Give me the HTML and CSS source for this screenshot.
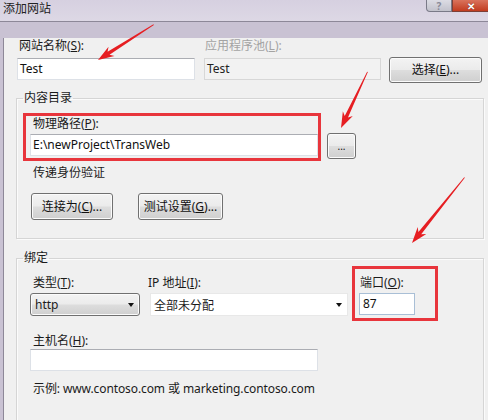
FILE: index.html
```html
<!DOCTYPE html>
<html lang="zh-CN">
<head>
<meta charset="utf-8">
<title>添加网站</title>
<link rel="stylesheet" href="styles.css">
</head>
<body>
<div class="titlebar">
  <span class="title">添加网站</span>
  <div class="caption-btns">
    <span class="cap-help">?</span>
    <span class="cap-close">✕</span>
  </div>
</div>
<div class="client">
  <div class="row1">
    <div class="field f-name">
      <div class="lbl">网站名称(<u>S</u>):</div>
      <div class="tb">Test</div>
    </div>
    <div class="field f-pool">
      <div class="lbl dis">应用程序池(<u>L</u>):</div>
      <div class="tb tb-dis">Test</div>
    </div>
    <button class="btn btn-select">选择(<u>E</u>)...</button>
  </div>

  <fieldset class="group g-content">
    <legend>内容目录</legend>
    <div class="lbl lbl-path">物理路径(<u>P</u>):</div>
    <div class="path-row">
      <div class="tb tb-path">E:\newProject\TransWeb</div>
      <button class="btn btn-browse">...</button>
    </div>
    <div class="lbl lbl-auth">传递身份验证</div>
    <div class="auth-row">
      <button class="btn btn-connect">连接为(<u>C</u>)...</button>
      <button class="btn btn-test">测试设置(<u>G</u>)...</button>
    </div>
  </fieldset>

  <fieldset class="group g-bind">
    <legend>绑定</legend>
    <div class="bind-row">
      <div class="col col-type">
        <div class="lbl">类型(<u>T</u>):</div>
        <div class="combo combo-btn"><span>http</span><span class="arrow"></span></div>
      </div>
      <div class="col col-ip">
        <div class="lbl">IP 地址(<u>I</u>):</div>
        <div class="combo combo-edit"><span>全部未分配</span><span class="arrow"></span></div>
      </div>
      <div class="col col-port">
        <div class="lbl">端口(<u>O</u>):</div>
        <div class="tb tb-port">87</div>
      </div>
    </div>
    <div class="lbl lbl-host">主机名(<u>H</u>):</div>
    <div class="tb tb-host"></div>
    <div class="lbl lbl-example">示例: www.contoso.com 或 marketing.contoso.com</div>
  </fieldset>
</div>

<div class="mark mark-path"></div>
<div class="mark mark-port"></div>
<svg class="arrows" width="488" height="420" viewBox="0 0 488 420">
  <g transform="translate(98 60) rotate(147.5)">
    <polygon points="0,0 -16,-5.5 -12.5,-1.8 -66,-0.4 -66,0.4 -12.5,1.8 -16,5.5"/>
  </g>
  <g transform="translate(341 128) rotate(115.3)">
    <polygon points="0,0 -16,-5.5 -12.5,-1.8 -62,-0.4 -62,0.4 -12.5,1.8 -16,5.5"/>
  </g>
  <g transform="translate(412 243) rotate(128.7)">
    <polygon points="0,0 -16,-5.5 -12.5,-1.8 -84,-0.4 -84,0.4 -12.5,1.8 -16,5.5"/>
  </g>
</svg>
</body>
</html>
```
FILE: styles.css
```css
* { box-sizing: border-box; }
html, body { margin: 0; padding: 0; }
body {
  width: 488px;
  height: 420px;
  overflow: hidden;
  position: relative;
  background: #c9c2d3;
  font-family: "Noto Sans", "Noto Sans CJK SC", sans-serif;
  font-size: 12px;
  color: #1b1b1b;
}
u { text-decoration: underline; text-underline-offset: 1px; }

.titlebar {
  height: 22px;
  display: flex;
  justify-content: space-between;
  align-items: flex-start;
  background: linear-gradient(#d6d0e0, #ddd8e5);
  border-bottom: 1px solid #8d8898;
}
.title {
  padding: 1px 0 0 3px;
  line-height: 16px;
  font-size: 12px;
  color: #222;
}
.caption-btns { display: flex; }
.cap-help, .cap-close {
  height: 12px;
  display: flex;
  align-items: center;
  justify-content: center;
  font-size: 10px;
  line-height: 10px;
  font-weight: bold;
}
.cap-help {
  width: 26px;
  background: linear-gradient(#dcdce4, #c2c2cc);
  border: 1px solid #7a7a88;
  border-top: none;
  border-radius: 0 0 0 4px;
  color: #8a8a98;
}
.cap-close {
  width: 36px;
  background: linear-gradient(#d9735c, #c23c20);
  border: 1px solid #7d3f36;
  border-top: none;
  border-right: none;
  color: #fff;
  text-shadow: 0 0 1px #5a1a10;
}

.client {
  margin-left: 3px;
  height: 398px;
  background: #f0f0f0;
  border-left: 1px solid #8d8898;
}

.lbl { line-height: 16px; white-space: nowrap; }
.dis { color: #a3a3a3; }

.tb {
  height: 22px;
  background: #fff;
  border: 1px solid #dde1e7;
  border-top-color: #abadb3;
  padding-left: 2px;
  line-height: 20px;
  color: #111;
}
.tb-dis {
  background: #f2f2f2;
  border-color: #d7d7d7;
  color: #222;
}

.row1 {
  display: flex;
  align-items: flex-start;
  margin-top: 16px;
  padding-left: 13px;
}
.field .lbl { padding-left: 2px; margin-bottom: 4px; }
.f-name { width: 178px; }
.f-pool { width: 177px; margin-left: 9px; }
.f-pool .lbl { padding-left: 1px; }

.btn {
  font: inherit;
  color: #111;
  padding: 0;
  border: 1px solid #707070;
  border-radius: 3px;
  background: linear-gradient(#f3f3f3 0%, #ebebeb 48%, #dddddd 52%, #cfcfcf 100%);
  box-shadow: inset 0 0 0 1px #fbfbfb;
  text-align: center;
  line-height: 16px;
}
.btn-select { width: 93px; height: 26px; margin-left: 8px; margin-top: 19px; }

.group {
  margin: 0 0 0 12px;
  width: 468px;
  padding: 0;
  border: 1px solid #d5d5d5;
  box-shadow: inset 1px 1px 0 #fbfbfb, 1px 1px 0 #fbfbfb;
  min-width: 0;
}
.group legend {
  margin-left: 6px;
  padding: 0 1px;
  line-height: 16px;
}
.g-content { margin-top: 7px; padding-bottom: 18px; }

.lbl-path { margin: 10px 0 1px 16px; }
.path-row { display: flex; align-items: flex-start; margin-left: 13px; }
.tb-path { width: 288px; margin-top: 1px; }
.btn-browse { width: 29px; height: 26px; margin-left: 9px; font-size: 10px; line-height: 10px; }

.lbl-auth { margin: 6px 0 0 16px; }
.auth-row { display: flex; margin: 12px 0 0 14px; }
.btn-connect { width: 82px; height: 27px; }
.btn-test { width: 85px; height: 27px; margin-left: 25px; }

.g-bind { margin-top: 11px; height: 170px; border-bottom: none; }
.bind-row { display: flex; margin-top: 9px; }
.col .lbl { margin-bottom: 2px; }
.col-type { margin-left: 13px; width: 110px; }
.col-type .lbl { padding-left: 3px; }
.col-ip { margin-left: 8px; }
.col-ip .combo { margin-left: 2px; width: 198px; }
.col-port { margin-left: 11px; }
.col-port .lbl { padding-left: 1px; }

.combo {
  height: 23px;
  display: flex;
  align-items: center;
  justify-content: space-between;
  padding: 0 4px 0 4px;
}
.combo-btn {
  border: 1px solid #707070;
  border-radius: 3px;
  background: linear-gradient(#f3f3f3 0%, #ebebeb 48%, #dddddd 52%, #cfcfcf 100%);
  box-shadow: inset 0 0 0 1px #fbfbfb;
}
.combo-edit {
  background: #fff;
  border: 1px solid #e8e8e8;
  padding-left: 3px;
}
.arrow {
  width: 0;
  height: 0;
  border-left: 3px solid transparent;
  border-right: 3px solid transparent;
  border-top: 4px solid #111;
  margin-right: 1px;
}
.tb-port { width: 56px; border-color: #a9bfd6; padding-left: 3px; }

.lbl-host { margin: 17px 0 0 16px; }
.tb-host { width: 288px; margin-left: 13px; }
.lbl-example { margin: 10px 0 0 16px; color: #1b1b1b; letter-spacing: -0.1px; }

.mark {
  position: absolute;
  border: 3px solid #e8353c;
}
.mark-path { left: 23px; top: 113px; width: 298px; height: 48px; }
.mark-port { left: 352px; top: 266px; width: 86px; height: 55px; }

.arrows { position: absolute; left: 0; top: 0; pointer-events: none; }
.arrows polygon { fill: #e61e22; }
```
